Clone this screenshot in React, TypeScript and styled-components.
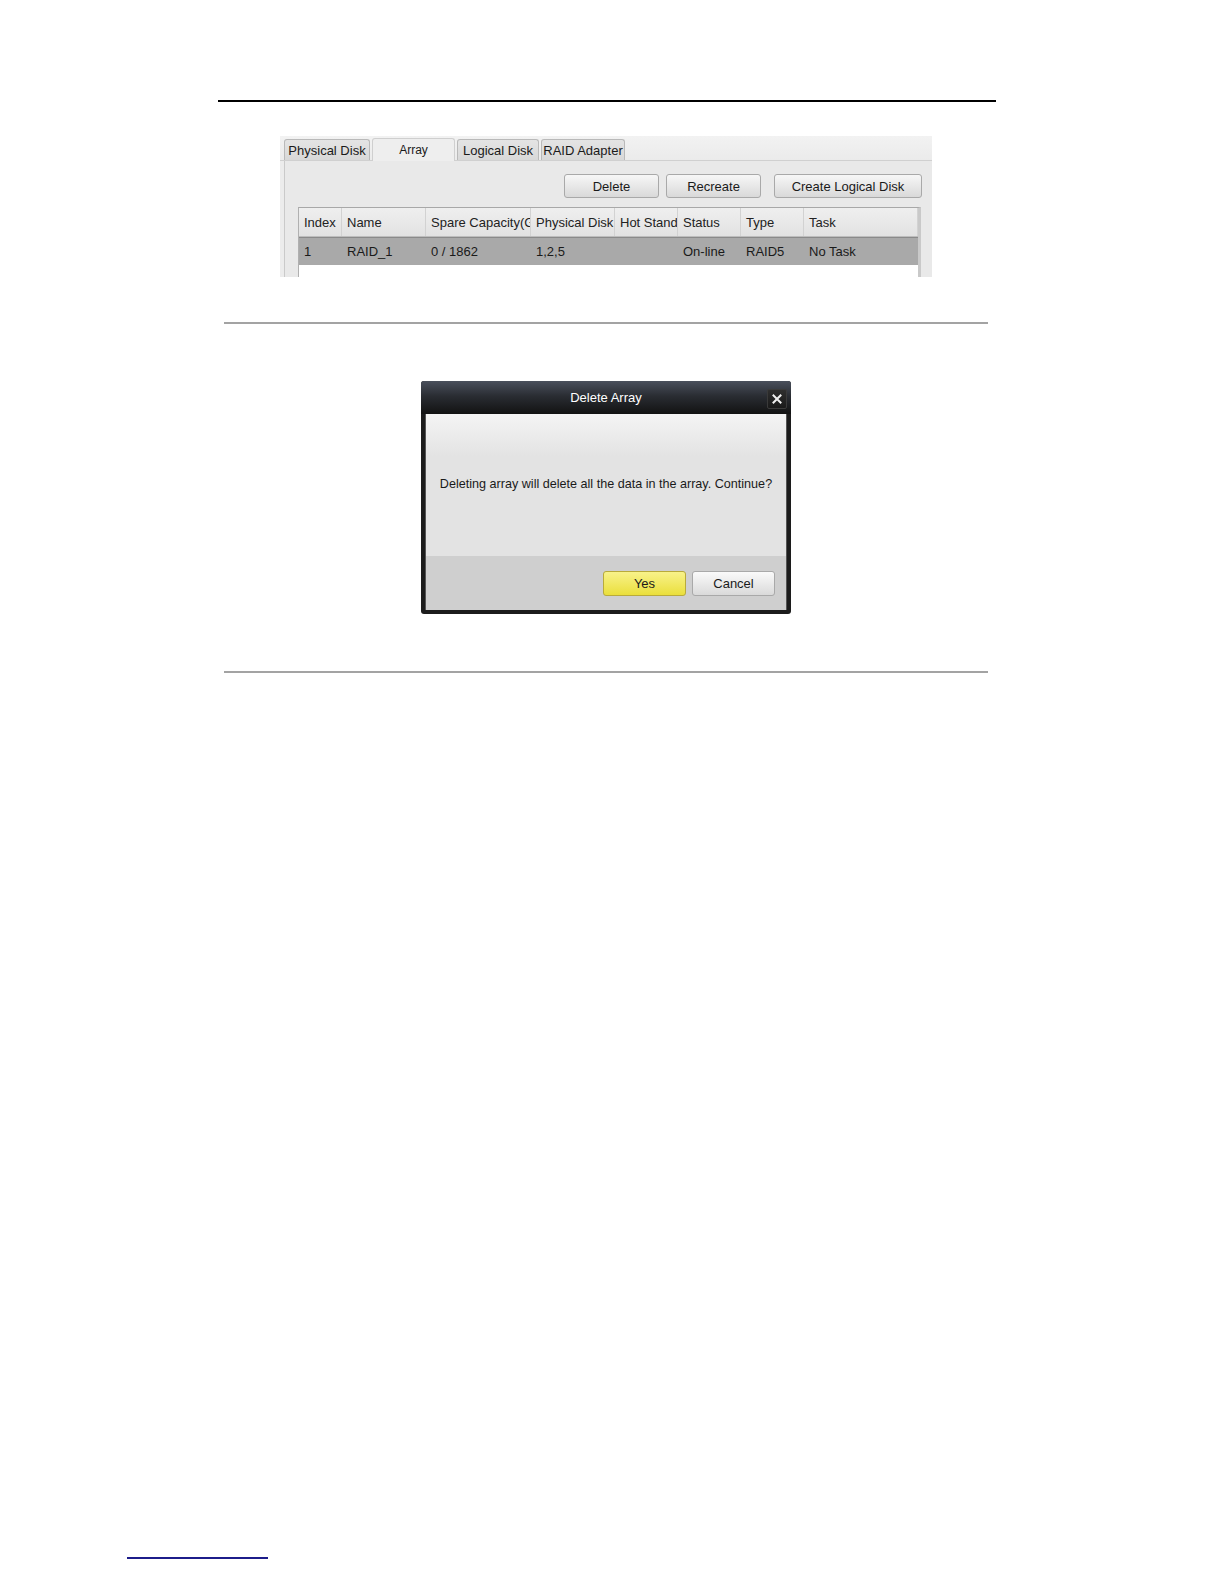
import React from "react";
import styled, { createGlobalStyle } from "styled-components";

const Global = createGlobalStyle`
  html, body { margin: 0; padding: 0; background: #ffffff; }
  body { font-family: "Liberation Sans", Arial, sans-serif; }
`;

const Page = styled.div`
  height: 1584px;
  display: flex;
  flex-direction: column;
  box-sizing: border-box;
  padding-top: 100px;
  position: relative;
  overflow: hidden;
`;

const TopRule = styled.div`
  margin-left: 218px;
  width: 778px;
  height: 2px;
  background: #000;
`;

const Shot = styled.div`
  margin: 34px 0 0 280px;
  width: 652px;
  height: 141px;
  background: #ececec;
  display: flex;
  flex-direction: column;
  overflow: hidden;
  font-size: 13px;
  color: #1a1a1a;
`;

const TabStrip = styled.div`
  height: 24px;
  display: flex;
  align-items: flex-end;
  padding-left: 4px;
  gap: 2px;
  background: linear-gradient(#f2f2f2, #ebebeb);
  border-bottom: 1px solid #d0d0d0;
`;

const Tab = styled.div<{ $active?: boolean; $w: number }>`
  width: ${(p) => p.$w}px;
  height: ${(p) => (p.$active ? 23 : 21)}px;
  box-sizing: border-box;
  display: flex;
  align-items: center;
  justify-content: center;
  border: 1px solid ${(p) => (p.$active ? "#cfcfcf" : "#b9b9b9")};
  border-bottom: none;
  border-radius: 3px 3px 0 0;
  background: ${(p) => (p.$active ? "#eeeeee" : "linear-gradient(#e4e4e4, #d8d8d8)")};
  font-size: ${(p) => (p.$active ? 12 : 13)}px;
  white-space: nowrap;
  margin-bottom: ${(p) => (p.$active ? -1 : 0)}px;
`;

const Panel = styled.div`
  flex: 1;
  margin-left: 4px;
  border-left: 1px solid #cacaca;
  background: #e9e9e9;
  display: flex;
  flex-direction: column;
  padding: 13px 10px 0 13px;
`;

const Toolbar = styled.div`
  display: flex;
  justify-content: flex-end;
  gap: 7px;
`;

const Btn = styled.div<{ $w: number; $mr?: number }>`
  width: ${(p) => p.$w}px;
  height: 24px;
  box-sizing: border-box;
  margin-right: ${(p) => p.$mr ?? 0}px;
  border: 1px solid #a9a9a9;
  border-radius: 3px;
  background: linear-gradient(#f7f7f7, #d9d9d9);
  display: flex;
  align-items: center;
  justify-content: center;
  font-size: 13px;
  color: #1a1a1a;
`;

const Table = styled.div`
  margin-top: 9px;
  width: 623px;
  flex: 1;
  background: #fff;
  border-top: 1px solid #a8a8a8;
  border-left: 1px solid #b0b0b0;
  border-right: 3px solid #c9c9c9;
  box-sizing: border-box;
  display: flex;
  flex-direction: column;
`;

const Row = styled.div<{ $head?: boolean }>`
  display: grid;
  grid-template-columns: 43px 84px 105px 84px 63px 63px 63px 114px;
  height: ${(p) => (p.$head ? 28 : 27)}px;
  background: ${(p) => (p.$head ? "linear-gradient(#efefef, #e2e2e2)" : "#a9a9a9")};
  border-top: ${(p) => (p.$head ? "none" : "1px solid #8a8a8a")};
  border-bottom: ${(p) => (p.$head ? "1px solid #bdbdbd" : "none")};
`;

const Cell = styled.div<{ $head?: boolean }>`
  display: flex;
  align-items: center;
  padding-left: 5px;
  overflow: hidden;
  white-space: nowrap;
  font-size: 13px;
  color: ${(p) => (p.$head ? "#222" : "#1a1a1a")};
  border-right: ${(p) => (p.$head ? "1px solid #d2d2d2" : "none")};
`;

const Divider = styled.div<{ $mt: number }>`
  margin: ${(p) => p.$mt}px 0 0 224px;
  width: 764px;
  height: 2px;
  background: #a3a3a3;
`;

const Dialog = styled.div`
  margin: 57px 0 0 421px;
  width: 370px;
  height: 233px;
  box-sizing: border-box;
  background: #1c1c1c;
  border-radius: 3px;
  padding: 0 4px 4px 4px;
  display: flex;
  flex-direction: column;
`;

const TitleBar = styled.div`
  height: 33px;
  margin: 0 -4px;
  border-radius: 3px 3px 0 0;
  background: linear-gradient(#4a505c, #2a2d33 45%, #121212);
  position: relative;
  display: flex;
  align-items: center;
  justify-content: center;
  color: #fff;
  font-size: 13px;
`;

const Close = styled.div`
  position: absolute;
  right: 4px;
  top: 8px;
  width: 20px;
  height: 20px;
  box-sizing: border-box;
  border: 1px solid #3a3a3a;
  border-radius: 2px;
  background: linear-gradient(#2e2e2e, #1a1a1a);
  display: flex;
  align-items: center;
  justify-content: center;
`;

const Body = styled.div`
  height: 142px;
  background: linear-gradient(#f4f4f4, #e3e3e3 30%, #e3e3e3);
  display: flex;
  align-items: center;
  justify-content: center;
  font-size: 12.6px;
  color: #1a1a1a;
  padding-bottom: 2px;
  box-sizing: border-box;
  border-left: 1px solid #555;
  border-right: 1px solid #555;
`;

const Footer = styled.div`
  flex: 1;
  background: #cfcfcf;
  display: flex;
  align-items: center;
  justify-content: flex-end;
  gap: 6px;
  padding-right: 11px;
  border-left: 1px solid #555;
  border-right: 1px solid #555;
`;

const DlgBtn = styled.div<{ $yes?: boolean }>`
  width: 83px;
  height: 25px;
  box-sizing: border-box;
  border-radius: 3px;
  border: 1px solid ${(p) => (p.$yes ? "#b9ab3a" : "#a9a9a9")};
  background: ${(p) =>
    p.$yes ? "linear-gradient(#f8f28a, #eadf3c)" : "linear-gradient(#fafafa, #dadada)"};
  display: flex;
  align-items: center;
  justify-content: center;
  font-size: 13px;
  color: #1a1a1a;
`;

const LinkRule = styled.div`
  position: absolute;
  left: 127px;
  top: 1557px;
  width: 141px;
  height: 2px;
  background: #1c1c8a;
`;

const cols = ["Index", "Name", "Spare Capacity(G", "Physical Disk", "Hot Stand", "Status", "Type", "Task"];
const row = ["1", "RAID_1", "0 / 1862", "1,2,5", "", "On-line", "RAID5", "No Task"];

export default function App() {
  return (
    <>
      <Global />
      <Page>
        <TopRule />
        <Shot>
          <TabStrip>
            <Tab $w={86}>Physical Disk</Tab>
            <Tab $w={83} $active>Array</Tab>
            <Tab $w={82}>Logical Disk</Tab>
            <Tab $w={84}>RAID Adapter</Tab>
          </TabStrip>
          <Panel>
            <Toolbar>
              <Btn $w={95}>Delete</Btn>
              <Btn $w={95} $mr={6}>Recreate</Btn>
              <Btn $w={148}>Create Logical Disk</Btn>
            </Toolbar>
            <Table>
              <Row $head>
                {cols.map((c) => (
                  <Cell $head key={c}>{c}</Cell>
                ))}
              </Row>
              <Row>
                {row.map((c, i) => (
                  <Cell key={i}>{c}</Cell>
                ))}
              </Row>
            </Table>
          </Panel>
        </Shot>
        <Divider $mt={45} />
        <Dialog>
          <TitleBar>
            Delete Array
            <Close>
              <svg width="10" height="10" viewBox="0 0 10 10">
                <path d="M1.5 1.5 L8.5 8.5 M8.5 1.5 L1.5 8.5" stroke="#f0f0f0" strokeWidth="2" strokeLinecap="square" />
              </svg>
            </Close>
          </TitleBar>
          <Body>Deleting array will delete all the data in the array. Continue?</Body>
          <Footer>
            <DlgBtn $yes>Yes</DlgBtn>
            <DlgBtn>Cancel</DlgBtn>
          </Footer>
        </Dialog>
        <Divider $mt={57} />
        <LinkRule />
      </Page>
    </>
  );
}
